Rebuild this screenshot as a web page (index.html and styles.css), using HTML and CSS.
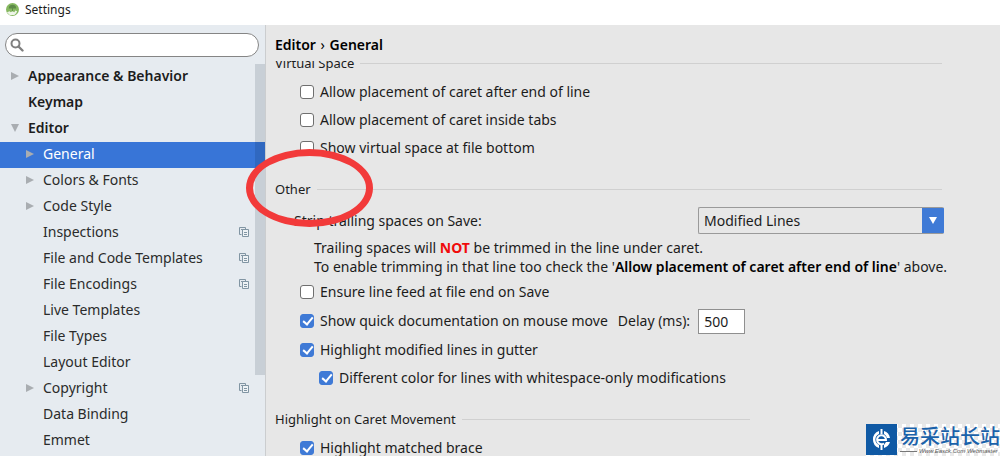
FILE: index.html
```html
<!DOCTYPE html>
<html lang="en">
<head>
    <meta charset="UTF-8">
    <meta name="viewport" content="width=device-width, initial-scale=1.0">
    <title>Settings</title>
    <link rel="stylesheet" href="styles.css">
</head>
<body>
    <svg class="sprite" aria-hidden="true">
        <symbol id="copy" viewBox="0 0 10 10">
            <path d="M2.5 7.5h-2v-7h6v2M2 2.5h3" fill="none" stroke="#8195a3"/>
            <path d="M3.5 2.5h6v7h-6zM5 5.5h3M5 7.5h3" fill="#eef2f5" stroke="#8195a3"/>
        </symbol>
    </svg>

    <header class="titlebar">
        <svg class="app-icon" viewBox="0 0 14 14">
            <circle cx="7" cy="7" r="7" fill="#86b860"/>
            <path d="M3 6a4 4 0 0 1 8 0z" fill="#5d8a47"/>
            <path d="M7 4v5" stroke="#5d8a47" fill="none"/>
            <path d="M1 10l3-1 1 1 2-1 2 1 1-2 2 1-1 2-2 2H4z" fill="#eef5e8"/>
        </svg>
        <span>Settings</span>
    </header>

    <div class="window">
        <aside class="sidebar">
            <div class="search">
                <svg viewBox="0 0 14 14">
                    <circle cx="5.5" cy="5.5" r="4" fill="none" stroke="#808080" stroke-width="2"/>
                    <path d="M8.5 8.5l4 4" stroke="#808080" stroke-width="2.4" stroke-linecap="round"/>
                </svg>
                <input type="text" aria-label="Search settings">
            </div>
            <nav class="tree">
                <a href="#" class="item top"><i class="arrow"></i>Appearance &amp; Behavior</a>
                <a href="#" class="item top"><i class="blank"></i>Keymap</a>
                <a href="#" class="item top"><i class="arrow open"></i>Editor</a>
                <a href="#" class="item selected"><i class="arrow"></i>General</a>
                <a href="#" class="item"><i class="arrow"></i>Colors &amp; Fonts</a>
                <a href="#" class="item"><i class="arrow"></i>Code Style</a>
                <a href="#" class="item"><i class="blank"></i>Inspections<svg class="copy"><use href="#copy"/></svg></a>
                <a href="#" class="item"><i class="blank"></i>File and Code Templates<svg class="copy"><use href="#copy"/></svg></a>
                <a href="#" class="item"><i class="blank"></i>File Encodings<svg class="copy"><use href="#copy"/></svg></a>
                <a href="#" class="item"><i class="blank"></i>Live Templates</a>
                <a href="#" class="item"><i class="blank"></i>File Types</a>
                <a href="#" class="item"><i class="blank"></i>Layout Editor</a>
                <a href="#" class="item"><i class="arrow"></i>Copyright<svg class="copy"><use href="#copy"/></svg></a>
                <a href="#" class="item"><i class="blank"></i>Data Binding</a>
                <a href="#" class="item"><i class="blank"></i>Emmet</a>
                <div class="scrollbar"></div>
            </nav>
        </aside>

        <main class="content">
            <h1>Editor <span>›</span> General</h1>
            <form class="pane">
                <h2 class="cut">Virtual Space</h2>
                <div class="group">
                    <label class="check"><input type="checkbox">Allow placement of caret after end of line</label>
                    <label class="check"><input type="checkbox">Allow placement of caret inside tabs</label>
                    <label class="check"><input type="checkbox">Show virtual space at file bottom</label>
                </div>

                <div class="section">
                    <h2>Other</h2>
                    <div class="ring"></div>
                </div>
                <div class="strip">
                    <label for="strip">Strip trailing spaces on Save:</label>
                    <div class="dropdown">
                        <select id="strip">
                            <option>Modified Lines</option>
                            <option>All</option>
                            <option>None</option>
                        </select>
                    </div>
                </div>
                <p class="note">Trailing spaces will <b class="not">NOT</b> be trimmed in the line under caret.<br>
                    To enable trimming in that line too check the '<b>Allow placement of caret after end of line</b>' above.</p>
                <div class="group">
                    <label class="check"><input type="checkbox">Ensure line feed at file end on Save</label>
                    <div class="row">
                        <label class="check"><input type="checkbox" checked>Show quick documentation on mouse move</label>
                        <label for="delay">Delay (ms):</label>
                        <input type="text" id="delay" value="500">
                    </div>
                    <label class="check"><input type="checkbox" checked>Highlight modified lines in gutter</label>
                    <label class="check nested"><input type="checkbox" checked>Different color for lines with whitespace-only modifications</label>
                </div>

                <h2 class="short">Highlight on Caret Movement</h2>
                <div class="group">
                    <label class="check"><input type="checkbox" checked>Highlight matched brace</label>
                </div>
            </form>
        </main>
    </div>

    <div class="watermark">
        <svg viewBox="0 0 31 31">
            <rect width="31" height="31" fill="#0f59a4"/>
            <path d="M13 7a9 9 0 0 0 0 17v-3a6 6 0 0 1 0-11zM18 7a9 9 0 0 1 6 7h-3a6 6 0 0 0-3-4zM18 24a9 9 0 0 0 6-6h-4l-2 3z" fill="#fff"/>
            <path d="M11 16h9a4.500 4.500 0 1 0-2 3.500" fill="none" stroke="#fff" stroke-width="2"/>
            <path d="M15.500 5v5M15.500 21v5" stroke="#fff" stroke-width="2"/>
        </svg>
        <div class="brand">
            <strong lang="zh">易采站长站</strong>
            <small>Www.Easck.Com Webmaster</small>
        </div>
    </div>
</body>
</html>
```
FILE: styles.css
```css
* {
    box-sizing: border-box;
}
body {
    margin: 0;
    height: 100vh;
    display: flex;
    flex-direction: column;
    overflow: hidden;
    background: #e7e7e7;
    color: #1c1c1c;
    font-family: "Noto Sans", "Open Sans", sans-serif;
    font-size: 14px;
    line-height: 20px;
}
.sprite {
    display: none;
}
.titlebar {
    flex: none;
    display: flex;
    align-items: center;
    gap: 6px;
    height: 25px;
    padding: 0 6px 6px;
    background: #fff;
    font-size: 12px;
}
.app-icon {
    width: 13px;
    height: 13px;
}
.window {
    flex: 1;
    min-height: 0;
    display: flex;
}

/* sidebar */
.sidebar {
    flex: none;
    width: 266px;
    display: flex;
    flex-direction: column;
    background: #e6ebf0;
    border-right: 1px solid #cbcdcf;
}
.search {
    flex: none;
    display: flex;
    align-items: center;
    gap: 4px;
    height: 24px;
    margin: 8px 6px 7px 5px;
    padding: 0 10px 0 4px;
    background: #fff;
    border: 1px solid #858585;
    border-radius: 12px;
}
.search svg {
    width: 14px;
    height: 14px;
}
.search input {
    flex: 1;
    min-width: 0;
    border: none;
    outline: none;
    background: none;
    font: inherit;
}
.tree {
    position: relative;
    flex: 1;
    min-height: 0;
    overflow: hidden;
}
.item {
    display: flex;
    align-items: center;
    height: 26px;
    padding: 0 16px 2px 26px;
    color: #2b2b2b;
    text-decoration: none;
}
.item.top {
    padding-left: 11px;
    font-weight: 600;
    color: #1c1c1c;
}
.item.selected {
    background: #3875d7;
    color: #fff;
}
.arrow, .blank {
    width: 8px;
    height: 8px;
    margin-right: 9px;
}
.arrow {
    background: #a9adb1;
    clip-path: polygon(0 0, 100% 50%, 0 100%);
}
.arrow.open {
    clip-path: polygon(0 0, 100% 0, 50% 100%);
}
.copy {
    width: 10px;
    height: 10px;
    margin-left: auto;
}
.scrollbar {
    position: absolute;
    top: 0;
    right: 0;
    width: 10px;
    height: 311px;
    background: rgba(0, 20, 40, 0.13);
}

/* settings page */
.content {
    flex: 1;
    min-width: 0;
    display: flex;
    flex-direction: column;
    padding-left: 9px;
}
h1 {
    flex: none;
    margin: 0;
    padding: 10px 0 6px;
    font-size: 14px;
    font-weight: 600;
    color: #000;
}
h1 span {
    margin: 0 1px;
    font-weight: normal;
}
.pane {
    flex: 1;
    min-height: 0;
    max-width: 709px;
    padding-right: 40px;
    overflow: hidden;
}
h2 {
    display: flex;
    align-items: center;
    gap: 6px;
    margin: 0;
    padding-right: 2px;
    font-size: 13px;
    font-weight: normal;
}
h2::after {
    content: "";
    flex: 1;
    border-top: 1px solid #d0d0d0;
}
.cut {
    margin-top: -8px;
}
.short {
    width: 477px;
    margin-top: 17px;
}
.section {
    margin-top: 17px;
}
/* red marker drawn round the section title */
.ring {
    position: absolute;
    left: 246px;
    top: 149px;
    width: 127px;
    height: 78px;
    border: 7px solid #f23a3a;
    border-radius: 50%;
}
.group {
    padding-left: 25px;
}
.check {
    display: flex;
    align-items: center;
    gap: 6px;
    height: 28px;
    white-space: nowrap;
}
.group .check:first-child {
    margin-top: 5px;
}
.check input {
    appearance: none;
    flex: none;
    width: 14px;
    height: 14px;
    margin: 0;
    background: #fff;
    border: 1px solid #6f6f6f;
    border-radius: 3px;
}
.check input:checked {
    background: #3f7ad6;
    border-color: #3f7ad6;
}
.check input:checked::before {
    content: "";
    display: block;
    width: 4px;
    height: 8px;
    margin: 0 0 0 4px;
    border: solid #fff;
    border-width: 0 2px 2px 0;
    transform: rotate(40deg);
}
.nested {
    padding-left: 19px;
}
.row {
    display: flex;
    align-items: center;
    height: 30px;
}
.row .check:first-child {
    margin: 0 10px 0 0;
}
.row > input {
    width: 47px;
    height: 25px;
    margin-left: 8px;
    padding: 0 5px;
    border: 1px solid #8f8f8f;
    background: #fff;
    color: inherit;
    font: inherit;
}
.strip {
    display: flex;
    align-items: center;
    justify-content: space-between;
    margin-top: 8px;
    padding-left: 19px;
}
.dropdown {
    position: relative;
    width: 246px;
}
.dropdown select {
    appearance: none;
    display: block;
    width: 100%;
    height: 27px;
    padding: 0 26px 0 5px;
    border: 1px solid #9a9a9a;
    border-right-color: #3f7ad6;
    border-radius: 2px;
    background: linear-gradient(#3f7ad6, #3f7ad6) right / 22px 100% no-repeat border-box #e7e7e7;
    color: inherit;
    font: inherit;
}
.dropdown::after {
    content: "";
    position: absolute;
    right: 7px;
    top: 10px;
    width: 8px;
    height: 7px;
    background: #fff;
    clip-path: polygon(0 0, 100% 0, 50% 100%);
    pointer-events: none;
}
.note {
    margin: 4px 0 -3px;
    padding-left: 39px;
    line-height: 19px;
    white-space: nowrap;
}
.note b {
    color: #000;
    font-weight: 600;
}
.note .not {
    color: #f00b0b;
    font-weight: bold;
}

/* site mark in the corner */
.watermark {
    position: absolute;
    right: 0;
    bottom: 0;
    display: flex;
    width: 134px;
    height: 32px;
    background: repeating-conic-gradient(#fff 0 25%, #e9e9e9 0 50%) 0 0 / 8px 8px;
}
.watermark svg {
    flex: none;
    width: 31px;
    height: 31px;
}
.brand {
    flex: 1;
    min-width: 0;
    padding-left: 3px;
    white-space: nowrap;
}
.brand strong {
    display: block;
    color: #1a62aa;
    font-family: "Noto Sans CJK SC", sans-serif;
    font-size: 20px;
    font-weight: 500;
    line-height: 24px;
}
.brand small {
    display: flex;
    align-items: center;
    gap: 2px;
    color: #555;
    font-family: "Liberation Sans", sans-serif;
    font-size: 6px;
    font-style: italic;
    line-height: 7px;
}
.brand small::before {
    content: "";
    width: 17px;
    border-top: 1px solid #777;
}
```
